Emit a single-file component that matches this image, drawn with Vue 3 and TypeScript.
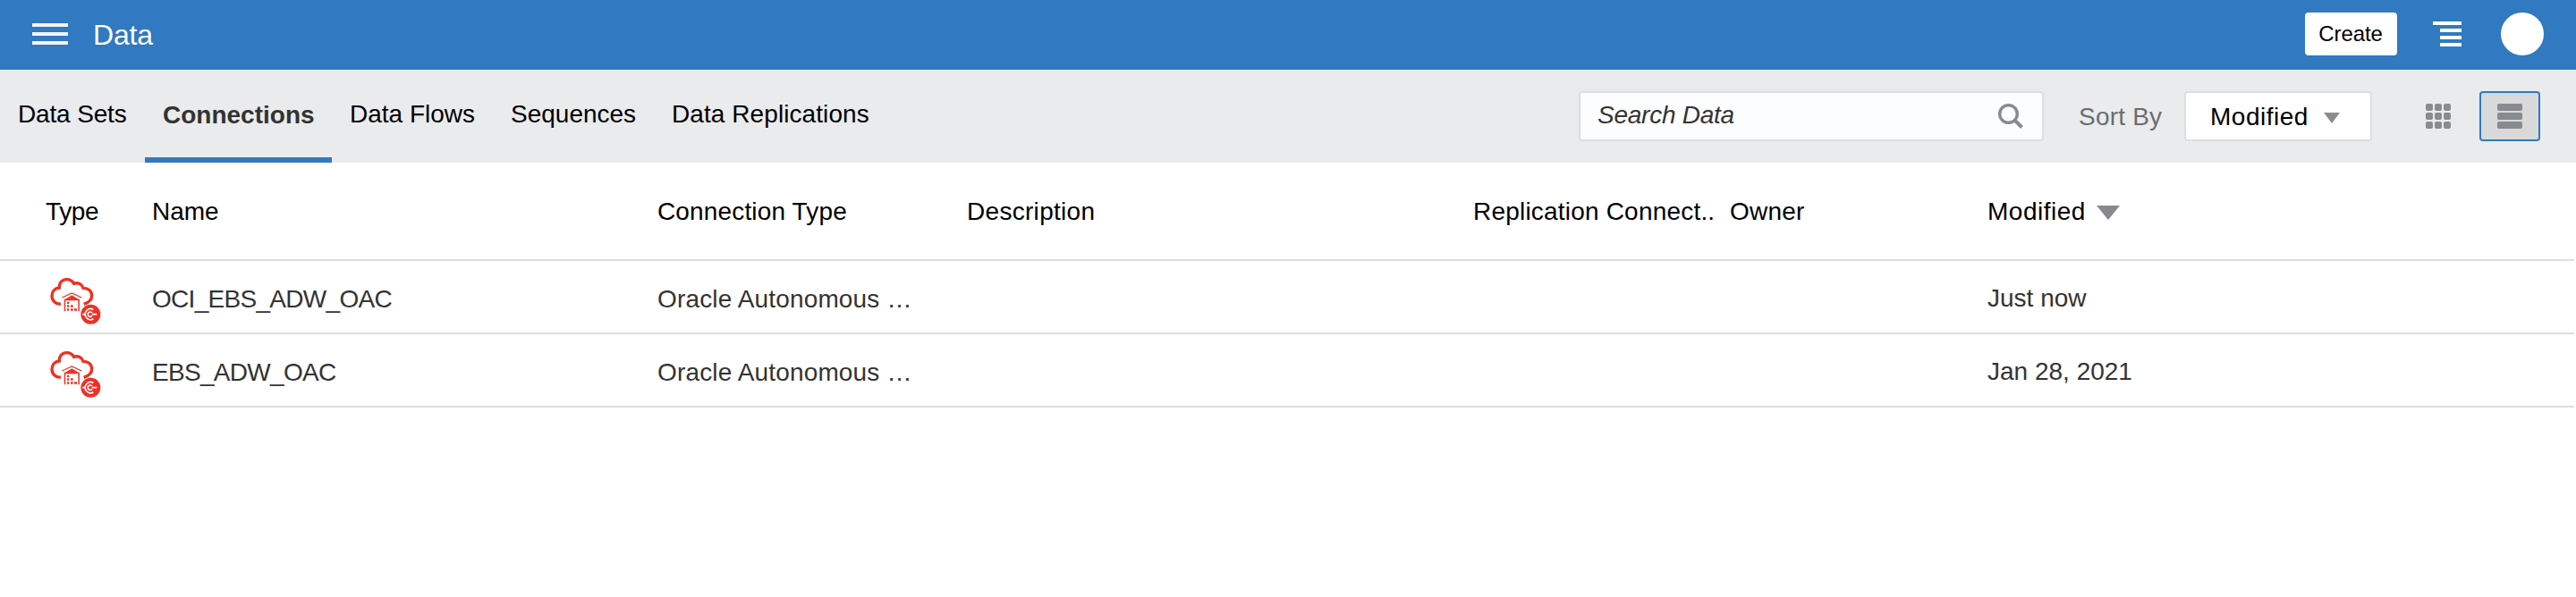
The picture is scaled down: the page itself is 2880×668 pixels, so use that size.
<script setup lang="ts">
interface Row { name: string; kind: string; modified: string }

const tabs: { label: string; id: string }[] = [
  { label: 'Data Sets', id: 'sets' },
  { label: 'Connections', id: 'connections' },
  { label: 'Data Flows', id: 'flows' },
  { label: 'Sequences', id: 'sequences' },
  { label: 'Data Replications', id: 'replications' },
]
const activeTab = 'connections'

const rows: Row[] = [
  { name: 'OCI_EBS_ADW_OAC', kind: 'Oracle Autonomous …', modified: 'Just now' },
  { name: 'EBS_ADW_OAC', kind: 'Oracle Autonomous …', modified: 'Jan 28, 2021' },
]
const cells = [0, 1, 2]
</script>

<template>
  <div class="page">
    <header class="topbar">
      <svg class="menu" width="40" height="24" viewBox="0 0 40 24" fill="#f4f5f6">
        <path d="M0 0h40v4H0zM0 10h40v4H0zM0 20h40v4H0z" />
      </svg>
      <h1>Data</h1>
      <button class="create">Create</button>
      <svg class="outline" width="32" height="28" viewBox="0 0 32 28" fill="#fff">
        <path d="M0 0h32v4H0zM8 8h24v4H8zM8 16h24v4H8zM8 24h24v4H8z" />
      </svg>
      <span class="avatar"></span>
    </header>

    <nav class="toolbar">
      <a v-for="t in tabs" :key="t.id" class="tab" :class="[t.id, { active: t.id === activeTab }]">{{ t.label }}</a>
      <div class="search">
        <span>Search Data</span>
        <svg width="30" height="30" viewBox="0 0 30 30" fill="none" stroke="#8a8b91">
          <circle cx="12.5" cy="12.5" r="9.8" stroke-width="3.4" />
          <path d="M19.5 19.5L27.5 27.5" stroke-width="4" />
        </svg>
      </div>
      <span class="sort-label">Sort By</span>
      <div class="select">
        <span class="wide">Modified</span>
        <svg width="18" height="12" viewBox="0 0 18 12"><path d="M0 0H18L9 12z" fill="#8b8c8e" /></svg>
      </div>
      <svg class="grid" width="28" height="28" viewBox="0 0 28 28" fill="#8a8b8d">
        <template v-for="y in cells" :key="y">
          <rect v-for="x in cells" :key="x" :x="x * 10" :y="y * 10" width="8" height="8" rx="2" />
        </template>
      </svg>
      <div class="list-button">
        <svg width="28" height="28" viewBox="0 0 28 28" fill="#878a8f">
          <rect v-for="y in cells" :key="y" x="0" :y="y * 10" width="28" height="8" rx="2" />
        </svg>
      </div>
    </nav>

    <main class="table">
      <div class="row head">
        <span class="type">Type</span>
        <span>Name</span>
        <span class="conn">Connection Type</span>
        <span class="desc">Description</span>
        <span class="repl">Replication Connect..</span>
        <span class="owner">Owner</span>
        <span class="mod wide">Modified
          <svg width="26" height="16" viewBox="0 0 26 16"><path d="M0 0H26L13 16z" fill="#88898d" /></svg>
        </span>
      </div>
      <div v-for="r in rows" :key="r.name" class="row body">
        <span class="type icon">
          <svg width="57" height="54" viewBox="77 61 171 162">
            <g fill="none" stroke="#ee3124">
              <path stroke-width="10" d="M113 151C97 153 83 141 83 125C83 109 93 98 108 97C107 79 118 69 133 69C144 69 152 74 157 83C171 78 184 85 188 98C204 97 217 108 217 124C217 139 205 147 190 152" />
              <path stroke-width="3.5" d="M117 130L150 115L183 130" />
              <path stroke-width="4.5" d="M126.500 176V137.500H173.500V176" />
            </g>
            <g fill="#ee3124">
              <path d="M126 137L150 122L174 137z" />
              <path d="M134 144h7v7h-7zM134 155h7v7h-7zM134 167h7v7h-7zM146 155h8v7h-8zM146 167h8v7h-8zM158 167h9v7h-9z" />
              <circle cx="213" cy="186" r="33" />
            </g>
            <g fill="none" stroke="#fff">
              <path stroke-width="5" d="M222 170.500A18 18 0 1 0 222 201.500M186 186H194" />
              <path stroke-width="5" d="M218 181A8 8 0 1 0 218 191M217 186H234" />
            </g>
          </svg>
        </span>
        <span class="name">{{ r.name }}</span>
        <span class="conn kind">{{ r.kind }}</span>
        <span></span><span></span><span></span>
        <span class="mod date">{{ r.modified }}</span>
      </div>
    </main>
  </div>
</template>

<style>
body { margin: 0; background: #fff; }
</style>

<style scoped>
.page { width: 2880px; height: 668px; overflow: hidden; background: #fff; color: #000; font: 28px/32px "Liberation Sans", Arial, sans-serif; white-space: nowrap; }
.topbar { height: 78px; box-sizing: border-box; padding: 0 36px; display: flex; align-items: center; background: #3179c1; }
.menu { margin-bottom: 2px; }
h1 { margin: 0 auto 0 28px; font-size: 32px; font-weight: 400; color: #fff; letter-spacing: -.2px; }
.create { width: 103px; height: 48px; margin: 0 40px 2px 0; padding: 0 1px 0 0; border: 0; border-radius: 4px; background: #fff; color: #000; font: 24px "Liberation Sans", Arial, sans-serif; letter-spacing: -.1px; }
.outline { margin: 0 44px 2px 0; }
.avatar { width: 48px; height: 48px; margin-bottom: 2px; border-radius: 50%; background: #fff; }
.toolbar { height: 104px; box-sizing: border-box; padding-right: 40px; display: flex; align-items: center; background: #eaebed; }
.tab { height: 104px; box-sizing: border-box; padding: 34px 0 0 20px; }
.sets { width: 162px; letter-spacing: -.15px; }
.connections { width: 209px; }
.flows { width: 180px; }
.sequences { width: 180px; }
.replications { letter-spacing: .08px; }
.active { padding-top: 35px; border-bottom: 6px solid #3179c1; font-weight: 700; color: #333; }
.search { width: 520px; height: 56px; box-sizing: border-box; margin-left: auto; padding: 0 20px 0 19px; border: 2px solid #d8dfe4; border-radius: 4px; display: flex; align-items: center; justify-content: space-between; background: #fcfdfe; color: #333; font-style: italic; letter-spacing: -.25px; }
.search span { margin-bottom: 2px; }
.sort-label { width: 118px; margin: 2px 0 0 39px; color: #6b6c6e; letter-spacing: .2px; }
.select { width: 210px; height: 56px; box-sizing: border-box; padding-left: 27px; border: 2px solid #d8dfe4; border-radius: 4px; display: flex; align-items: center; gap: 17px; background: #fff; }
.select span { padding-top: 2px; }
.select svg { margin-top: 3px; }
.wide { letter-spacing: .5px; }
.grid { margin: 0 32px 0 60px; }
.list-button { width: 68px; height: 56px; box-sizing: border-box; border: 2px solid #3179c1; border-radius: 4px; display: grid; place-items: center; background: #d9d9d9; }
.row { display: grid; grid-template-columns: 170px 565px 346px 566px 287px 288px 1fr; align-items: center; height: 82px; width: 2878px; box-sizing: border-box; border-bottom: 2px solid #d8dfe4; }
.head { height: 110px; }
.head > span { padding-top: 2px; }
.type { padding-left: 50px; letter-spacing: -.4px; }
.head > .type { padding-left: 51px; }
.icon { display: flex; padding-left: 56px; padding-top: 9px; }
.conn { letter-spacing: .15px; }
.desc { letter-spacing: .3px; }
.repl { letter-spacing: .2px; }
.owner { letter-spacing: .2px; }
.mod { display: flex; align-items: center; gap: 12px; }
.mod svg { margin-top: 1px; }
.body { color: #333; }
.name { letter-spacing: -.7px; padding-top: 5px; }
.kind { padding-top: 5px; }
.date { padding-top: 4px; }
</style>
